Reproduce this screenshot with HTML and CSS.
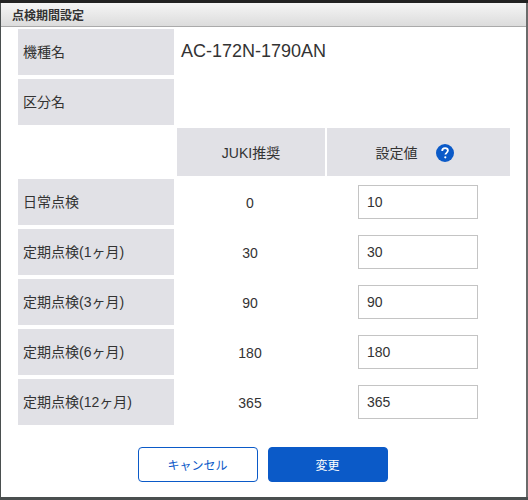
FILE: index.html
```html
<!DOCTYPE html>
<html lang="ja">
<head>
    <meta charset="UTF-8">
    <meta name="viewport" content="width=device-width, initial-scale=1.0">
    <title>点検期間設定</title>
    <link rel="stylesheet" href="styles.css">
</head>
<body>
    <div class="dialog">
        <div class="dialog-title">点検期間設定</div>
        <div class="dialog-body">
            <div class="row">
                <div class="label">機種名</div>
                <div class="model">AC-172N-1790AN</div>
            </div>
            <div class="row row-kubun">
                <div class="label">区分名</div>
            </div>
            <div class="row row-head">
                <div class="blank"></div>
                <div class="head">JUKI推奨</div>
                <div class="head head-value">
                    <span>設定値</span>
                    <svg class="help" width="18" height="18" viewBox="0 0 18 18">
                        <circle cx="9" cy="9" r="9" fill="#0b5ac8"/>
                        <path d="M6.2 7c0-1.7 1.2-2.8 2.9-2.8 1.6 0 2.8 1 2.8 2.4 0 1.1-.6 1.7-1.4 2.3-.7.5-1.1.9-1.1 1.7" fill="none" stroke="#fff" stroke-width="1.8"/>
                        <circle cx="9.3" cy="13.3" r="1.1" fill="#fff"/>
                    </svg>
                </div>
            </div>
            <div class="row">
                <div class="label">日常点検</div>
                <div class="rec">0</div>
                <div class="setting"><input type="text" value="10"></div>
            </div>
            <div class="row">
                <div class="label">定期点検(1ヶ月)</div>
                <div class="rec">30</div>
                <div class="setting"><input type="text" value="30"></div>
            </div>
            <div class="row">
                <div class="label">定期点検(3ヶ月)</div>
                <div class="rec">90</div>
                <div class="setting"><input type="text" value="90"></div>
            </div>
            <div class="row">
                <div class="label">定期点検(6ヶ月)</div>
                <div class="rec">180</div>
                <div class="setting"><input type="text" value="180"></div>
            </div>
            <div class="row">
                <div class="label">定期点検(12ヶ月)</div>
                <div class="rec">365</div>
                <div class="setting"><input type="text" value="365"></div>
            </div>
            <div class="buttons">
                <button class="btn btn-cancel">キャンセル</button>
                <button class="btn btn-submit">変更</button>
            </div>
        </div>
    </div>
</body>
</html>
```
FILE: styles.css
```css
html, body {
    height: 100%;
}

body {
    margin: 0;
    background: linear-gradient(#222 3px, #4a4f4f 3px);
    font-family: "Liberation Sans", "Noto Sans CJK JP", sans-serif;
    color: #333;
    overflow: hidden;
}

.dialog {
    box-sizing: border-box;
    width: 525px;
    height: 494px;
    margin: 3px 0 0 1px;
    background-color: #fff;
    box-shadow: 3px 0 0 #6b6b6b;
    display: flex;
    flex-direction: column;
}

.dialog-title {
    height: 23px;
    padding-left: 11px;
    background: linear-gradient(#f5f5f5, #dcdcdc);
    border-bottom: 1px solid #aaa;
    font-size: 12px;
    font-weight: bold;
    line-height: 26px;
}

.dialog-body {
    padding: 2px 0 0 17px;
}

.row {
    display: flex;
    height: 46px;
    margin-bottom: 4px;
    font-size: 14px;
}

.row-kubun {
    margin-bottom: 3px;
}

.row-head {
    height: 48px;
    margin-bottom: 3px;
}

.label {
    width: 156px;
    padding-left: 5px;
    box-sizing: border-box;
    background-color: #e1e1e6;
    display: flex;
    align-items: center;
    padding-bottom: 2px;
}

.model {
    margin-left: 7px;
    font-size: 18px;
    display: flex;
    align-items: center;
    padding-bottom: 2px;
}

.blank {
    width: 159px;
}

.head {
    width: 148px;
    background-color: #e1e1e6;
    display: flex;
    align-items: center;
    justify-content: center;
}

.head-value {
    width: 183px;
    margin-left: 2px;
    gap: 18px;
    padding-right: 8px;
    box-sizing: border-box;
}

.help {
    margin-top: 1px;
}

.rec {
    width: 150px;
    margin-left: 1px;
    padding-top: 2px;
    display: flex;
    align-items: center;
    justify-content: center;
}

.setting {
    margin-left: 33px;
    display: flex;
    align-items: center;
}

.setting input {
    box-sizing: border-box;
    width: 120px;
    height: 34px;
    padding: 0 8px;
    border: 1px solid #c4c4c4;
    font-family: inherit;
    font-size: 14px;
    color: #333;
}

.buttons {
    display: flex;
    justify-content: center;
    gap: 10px;
    margin-top: 22px;
    padding-right: 19px;
}

.btn {
    width: 120px;
    height: 35px;
    border-radius: 4px;
    font-family: inherit;
    font-size: 12px;
}

.btn-cancel {
    background-color: #fff;
    border: 1px solid #0b5ac8;
    color: #0b5ac8;
}

.btn-submit {
    background-color: #0b5ac8;
    border: 1px solid #0b5ac8;
    color: #fff;
}
```
